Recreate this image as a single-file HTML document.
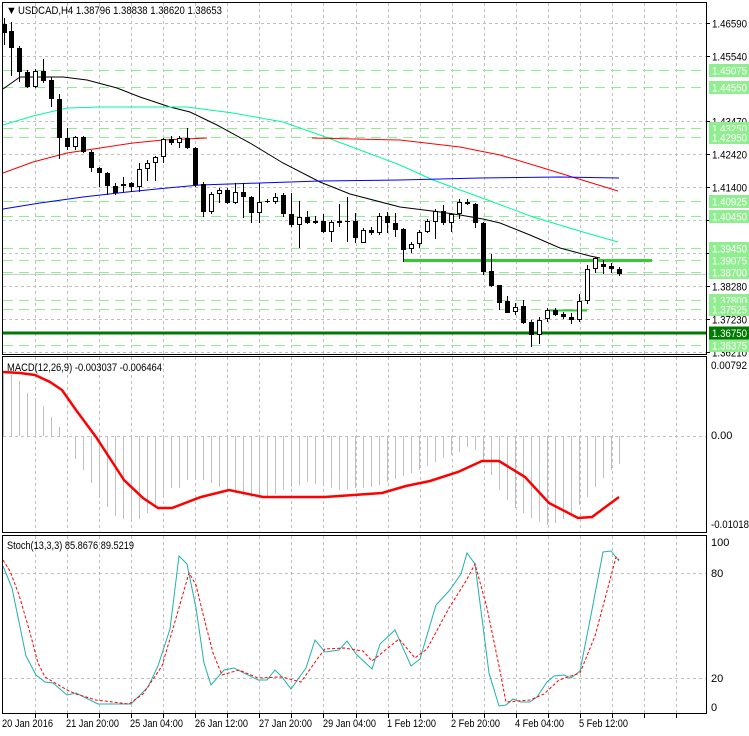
<!DOCTYPE html>
<html><head><meta charset="utf-8">
<style>
html,body{margin:0;padding:0;background:#fff;}
body{width:749px;height:731px;overflow:hidden;font-family:"Liberation Sans",Tahoma,sans-serif;}
svg text{font-family:"Liberation Sans",sans-serif;font-size:11px;}
</style></head><body>
<svg id="c" width="749" height="731" xmlns="http://www.w3.org/2000/svg">
<rect width="749" height="731" fill="#fff"/>
<g id="grid"></g>
<g id="lvl"></g>
<g id="main"></g>
<g id="ind"></g>
<g fill="none" stroke="#000" stroke-width="1">
<rect x="2.5" y="2.5" width="704" height="352"/>
<rect x="2.5" y="356.5" width="704" height="176"/>
<rect x="2.5" y="535.5" width="704" height="178"/>
</g>
<g id="axis" fill="#000"></g>
<text x="6" y="14" font-size="9">▼</text>
<text x="18" y="14" textLength="204" lengthAdjust="spacingAndGlyphs">USDCAD,H4  1.38796 1.38838 1.38620 1.38653</text>
<text x="7" y="371" textLength="155" lengthAdjust="spacingAndGlyphs">MACD(12,26,9) -0.003037 -0.006464</text>
<text x="7" y="549" textLength="127" lengthAdjust="spacingAndGlyphs">Stoch(13,3,3) 85.8676 89.5219</text>
<text x="711" y="369" textLength="36" lengthAdjust="spacingAndGlyphs">0.00792</text>
<text x="711" y="439">0.00</text>
<text x="711" y="528" textLength="38" lengthAdjust="spacingAndGlyphs">-0.01018</text>
<text x="711" y="546">100</text>
<text x="711" y="577">80</text>
<text x="711" y="682">20</text>
<text x="711" y="711">0</text>
<g font-size="11">
<text x="2" y="727" textLength="51" lengthAdjust="spacingAndGlyphs">20 Jan 2016</text>
<text x="66" y="727" textLength="53" lengthAdjust="spacingAndGlyphs">21 Jan 20:00</text>
<text x="130" y="727" textLength="53" lengthAdjust="spacingAndGlyphs">25 Jan 04:00</text>
<text x="195" y="727" textLength="53" lengthAdjust="spacingAndGlyphs">26 Jan 12:00</text>
<text x="259" y="727" textLength="53" lengthAdjust="spacingAndGlyphs">27 Jan 20:00</text>
<text x="323" y="727" textLength="53" lengthAdjust="spacingAndGlyphs">29 Jan 04:00</text>
<text x="387" y="727" textLength="49" lengthAdjust="spacingAndGlyphs">1 Feb 12:00</text>
<text x="451" y="727" textLength="49" lengthAdjust="spacingAndGlyphs">2 Feb 20:00</text>
<text x="515" y="727" textLength="49" lengthAdjust="spacingAndGlyphs">4 Feb 04:00</text>
<text x="579" y="727" textLength="49" lengthAdjust="spacingAndGlyphs">5 Feb 12:00</text>
</g>
<g id="labels"></g>
</svg>
<script>
var NS="http://www.w3.org/2000/svg";
function el(p,t,a,txt){var e=document.createElementNS(NS,t);for(var k in a)e.setAttribute(k,a[k]);if(txt!=null)e.textContent=txt;document.getElementById(p).appendChild(e);return e;}
for(var k=0;k<=20;k++){var x=Math.round(35.3+32.02*k)+0.5;
 [[3,354],[357,532],[536,713]].forEach(function(r){el('grid','line',{x1:x,y1:r[0],x2:x,y2:r[1],stroke:'#c0c0c0','stroke-dasharray':'3,3'});});
 el('axis','line',{x1:x,y1:714,x2:x,y2:718,stroke:'#000'});
}
var gl=[[22.7,'1.46590'],[55.5,'1.45540'],[121,'1.43470'],[154,'1.42420'],[187,'1.41400'],[219.5,''],[252.5,''],[286,'1.38280'],[319,'1.37230'],[351.5,'1.36210']];
gl.forEach(function(g){var y=Math.round(g[0])+0.5;el('grid','line',{x1:3,y1:y,x2:706,y2:y,stroke:'#c0c0c0','stroke-dasharray':'3,3'});
 el('axis','line',{x1:706,y1:y,x2:710,y2:y,stroke:'#000'});
 if(g[1])el('axis','text',{x:712,y:y+4,textLength:35,lengthAdjust:'spacingAndGlyphs'},g[1]);});
[436,573,678].forEach(function(y){el('grid','line',{x1:3,y1:y+.5,x2:706,y2:y+.5,stroke:'#c0c0c0','stroke-dasharray':'3,3'});});
var lv=[[70,'1.45075'],[86.5,'1.44550'],[127.6,'1.43250'],[137,'1.42950'],[201,'1.40925'],[216,'1.40450'],[248,'1.39450'],[260,'1.39075'],[272,'1.38700'],[300,'1.37800'],[309,'1.37525'],[345,'1.36375']];
lv.forEach(function(l){var y=Math.round(l[0])+0.5;el('lvl','line',{x1:3,y1:y,x2:706,y2:y,stroke:'#90ee90','stroke-dasharray':'10,6'});
 el('labels','rect',{x:709,y:y-6.5,width:40,height:13,fill:'#90ee90'});
 el('labels','text',{x:712,y:y+4,fill:'#fff',textLength:35,lengthAdjust:'spacingAndGlyphs'},l[1]);});
el('lvl','line',{x1:3,y1:274.5,x2:706,y2:274.5,stroke:'#c8c8c8'});
el('lvl','line',{x1:3,y1:333,x2:706,y2:333,stroke:'#007a00','stroke-width':3});
el('labels','rect',{x:709,y:326.5,width:40,height:13,fill:'#007a00'});
el('labels','text',{x:712,y:337,fill:'#fff',textLength:35,lengthAdjust:'spacingAndGlyphs'},'1.36750');
el('lvl','line',{x1:403,y1:260.5,x2:652,y2:260.5,stroke:'#32cd32','stroke-width':3});
el('lvl','line',{x1:547,y1:310.5,x2:587,y2:310.5,stroke:'#32cd32','stroke-width':2});
function pl(p,pts,st,w,da){el(p,'polyline',{points:pts.map(function(q){return q.join(',')}).join(' '),fill:'none',stroke:st,'stroke-width':w||1,'stroke-dasharray':da||'none'});}
pl('main',[[3,89],[20,77],[63,77],[87,80],[117,88],[140,97],[170,107],[190,112],[217,125],[250,143],[283,163],[320,182],[350,194],[400,207],[440,212],[460,215],[483,219],[500,223],[530,235],[560,248],[590,256],[600,258]],'#000');
pl('main',[[3,125],[33,116],[67,108],[100,107],[187,107],[233,113],[283,122],[320,135],[360,150],[400,165],[433,180],[493,202],[533,217],[583,232],[618,242]],'#00fa9a');
pl('main',[[3,173],[33,162],[67,153],[100,148],[133,143],[163,140],[207,138]],'#ff0000');
pl('main',[[312,138],[400,140],[460,147],[500,155],[540,167],[582,180],[618,191]],'#ff0000');
pl('main',[[3,209],[40,203],[83,197],[127,192],[167,188],[200,185],[260,183],[320,181],[400,180],[480,178],[560,177],[619,178]],'#0000ff');
var C=[[4,24,33,18,45],[11,31,48,22,76],[19,48,72,46,82],[27,72,87,70,88],[35,87,71,69,88],[43,71,81,59,83],[51,80,99,77,107],[59,99,138,94,159],[67,138,147,128,150],[75,147,137,136,150],[83,137,152,136,153],[91,152,168,150,172],[99,168,173,167,187],[107,173,186,172,195],[115,186,193,183,195],[123,186,184,177,192],[131,183,187,182,192],[139,187,169,163,192],[147,169,163,160,181],[155,163,157,156,181],[163,157,139,138,163],[171,139,143,136,145],[179,143,138,136,148],[187,138,148,128,149],[195,148,185,147,187],[203,184,212,182,217],[211,212,194,192,214],[219,194,190,188,203],[227,190,203,188,204],[235,203,192,183,204],[243,192,197,183,218],[251,197,213,196,223],[259,213,202,183,223],[267,201,201,199,203],[275,202,197,193,204],[283,195,214,193,217],[291,214,225,193,227],[299,225,217,201,248],[307,217,223,211,224],[315,221,223,216,224],[323,221,232,214,233],[331,232,222,220,242],[339,221,223,204,227],[347,221,221,197,242],[355,221,238,213,243],[363,243,230,228,243],[371,230,233,227,235],[379,233,216,213,235],[387,216,223,212,233],[395,223,230,213,237],[403,229,250,228,262],[411,249,244,242,253],[419,244,232,230,248],[427,232,221,219,233],[435,222,211,209,239],[443,211,223,205,225],[451,223,214,213,232],[459,214,202,199,219],[467,202,204,199,205],[475,204,223,203,228],[483,223,272,222,275],[491,271,286,254,287],[499,285,303,285,310],[507,301,313,296,313],[515,312,307,303,315],[523,306,323,300,324],[531,322,335,320,347],[539,335,320,317,344],[547,319,310,308,322],[555,310,315,308,316],[563,314,317,312,319],[571,317,320,313,324],[579,320,301,294,322],[587,301,269,265,304],[595,269,258,257,273],[603,264,267,260,274],[611,266,269,263,273],[619,269,274,267,276]];
C.forEach(function(c){var x=c[0],o=c[1],cl=c[2];
 el('main','line',{x1:x+.5,y1:c[3],x2:x+.5,y2:c[4],stroke:'#000'});
 var t=Math.min(o,cl),b=Math.max(o,cl);if(b-t<1){el('main','line',{x1:x-2,y1:t+.5,x2:x+3,y2:t+.5,stroke:'#000'});return;}
 if(cl>o)el('main','rect',{x:x-2,y:t,width:5,height:b-t,fill:'#000'});
 else el('main','rect',{x:x-1.5,y:t+.5,width:4,height:b-t-1,fill:'#fff',stroke:'#000'});
});
var H=[[3,372],[11,375],[19,381],[27,393],[35,398],[43,406],[51,417],[59,427],[67,437],[75,459],[83,470],[91,483],[99,495],[107,507],[115,516],[123,519],[131,520],[139,519],[147,513],[155,507],[163,497],[171,488],[179,488],[187,480],[195,477],[203,480],[211,483],[219,487],[227,490],[235,493],[243,496],[251,497],[259,497],[267,496],[275,494],[283,490],[291,487],[299,485],[307,482],[315,484],[323,486],[331,488],[339,490],[347,489],[355,488],[363,488],[371,487],[379,485],[387,482],[395,479],[403,476],[411,473],[419,470],[427,466],[435,462],[443,458],[451,455],[459,452],[467,447],[475,450],[483,462],[491,475],[499,490],[507,500],[515,508],[523,513],[531,518],[539,522],[547,525],[555,523],[563,519],[571,513],[579,505],[587,497],[595,487],[603,478],[611,470],[619,464]];
H.forEach(function(h){el('ind','line',{x1:h[0]+.5,y1:436,x2:h[0]+.5,y2:h[1],stroke:'#c0c0c0'});});
pl('ind',[[3,372],[20,373],[35,375],[50,382],[62,390],[76,410],[96,437],[124,480],[143,498],[158,508],[172,508],[201,497],[229,490],[263,497],[325,497],[382,493],[406,486],[430,481],[458,472],[482,461],[499,461],[525,477],[549,503],[578,518],[592,517],[619,497]],'#ff0000',2.5);
pl('ind',[[3,566],[12,588],[26,656],[36,675],[45,682],[53,683],[67,695],[76,693],[98,704],[131,704],[148,687],[158,666],[170,629],[179,556],[187,564],[196,608],[204,663],[211,685],[224,670],[234,668],[258,680],[267,680],[275,670],[282,677],[291,689],[306,668],[315,640],[325,652],[339,650],[347,641],[356,654],[372,669],[380,644],[395,630],[411,666],[420,659],[436,605],[449,591],[461,574],[467,553],[475,564],[489,673],[499,706],[506,705],[513,699],[521,702],[530,702],[537,697],[547,682],[554,676],[564,675],[571,678],[580,671],[591,615],[603,552],[611,551],[619,561]],'#20b2aa');
pl('ind',[[3,560],[10,571],[19,595],[29,629],[38,663],[45,677],[67,690],[76,694],[96,700],[129,704],[143,694],[162,666],[174,625],[189,573],[196,585],[205,622],[213,653],[222,675],[239,670],[258,678],[282,677],[301,682],[318,658],[325,649],[344,648],[363,651],[372,661],[399,639],[415,658],[427,649],[449,608],[466,581],[475,564],[487,608],[499,666],[506,702],[530,700],[544,694],[559,680],[580,673],[595,636],[606,595],[616,557],[619,560]],'#ff0000',1,'3,2');
</script>
</body></html>
